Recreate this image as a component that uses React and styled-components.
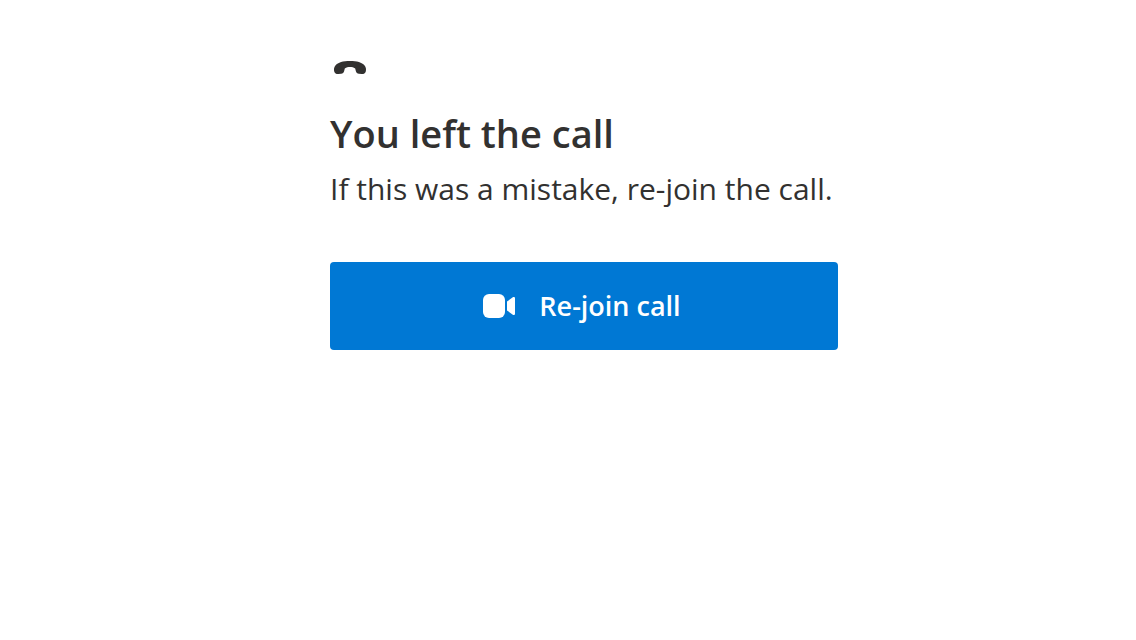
import React from "react";
import styled, { createGlobalStyle } from "styled-components";

const GlobalStyle = createGlobalStyle`
  * { box-sizing: border-box; }
  body {
    margin: 0;
    background: #ffffff;
    color: #323130;
    font-family: "Segoe UI", "Open Sans", "Noto Sans", sans-serif;
  }
`;

const Page = styled.main`
  display: flex;
  justify-content: center;
  padding: 48px 0 48px 32px;
`;

const Notice = styled.section`
  display: flex;
  flex-direction: column;
  width: 100%;
  max-width: 508px;
`;

const HangUpIcon = styled.svg`
  display: block;
  width: 40px;
  height: 40px;
`;

const Title = styled.h1`
  margin: 20px 0 0;
  font-size: 38px;
  font-weight: 600;
  line-height: 50px;
  white-space: nowrap;
`;

const Message = styled.p`
  margin: 10px 0 0;
  font-size: 30px;
  font-weight: 400;
  line-height: 42px;
  white-space: nowrap;
`;

const RejoinButton = styled.button`
  display: flex;
  align-items: center;
  justify-content: center;
  gap: 20px;
  margin-top: 52px;
  padding: 24px 32px 24px 24px;
  border: 0;
  border-radius: 4px;
  background: #0078d4;
  color: #ffffff;
  font-family: inherit;
  font-size: 27px;
  font-weight: 600;
  line-height: 40px;
  cursor: pointer;
`;

const CameraIcon = styled.svg`
  display: block;
  flex: none;
  width: 40px;
  height: 40px;
`;

export default function App() {
  return (
    <>
      <GlobalStyle />
      <Page>
        <Notice>
          <HangUpIcon viewBox="0 0 40 40" aria-hidden="true">
            <path
              fill="#323130"
              d="M20 13C27 13 32 14.500 34.400 17.300C36 19.200 36.400 21.500 35.700 23.700C35.100 25.500 33.700 26.200 31.700 26.100L28.900 25.800C27.300 25.600 26.300 24.700 25.900 23.200L25.200 20.400C23.600 19.500 21.900 19.100 20 19.100C18.100 19.100 16.400 19.500 14.800 20.400L14.100 23.200C13.700 24.700 12.700 25.600 11.100 25.800L8.300 26.100C6.300 26.200 4.900 25.500 4.300 23.700C3.600 21.500 4 19.200 5.600 17.300C8 14.500 13 13 20 13Z"
            />
          </HangUpIcon>
          <Title>You left the call</Title>
          <Message>If this was a mistake, re-join the call.</Message>
          <RejoinButton type="button">
            <CameraIcon viewBox="0 0 40 40" fill="currentColor" aria-hidden="true">
              <rect x="4" y="8" width="22" height="24" rx="6" />
              <path d="M28 15.600L33.800 11.300C34.800 10.500 36 11 36 12.300V27.700C36 29 34.800 29.500 33.800 28.700L28 24.400Z" />
            </CameraIcon>
            Re-join call
          </RejoinButton>
        </Notice>
      </Page>
    </>
  );
}
